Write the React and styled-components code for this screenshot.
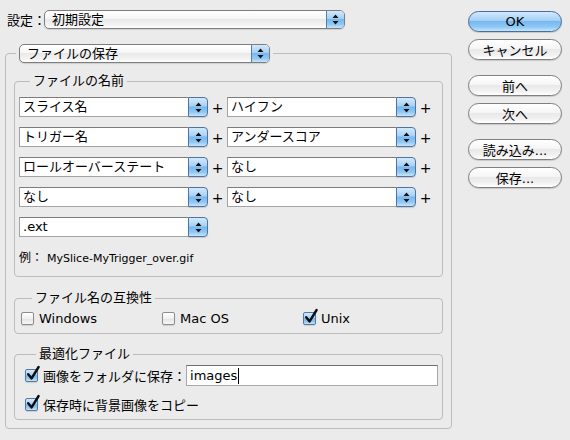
import React from 'react'
import styled, { createGlobalStyle, css } from 'styled-components'

const GlobalStyle = createGlobalStyle`
  html, body {
    margin: 0;
    padding: 0;
    background: #ebebeb;
  }
  body {
    font-family: "DejaVu Sans", "Noto Sans CJK JP", sans-serif;
    font-size: 13px;
    color: #000;
  }
  * { box-sizing: border-box; }
`

const aquaBlue = css`
  background: linear-gradient(to bottom, #d3e9fc 0%, #a6d1f6 44%, #78b8ef 50%, #8fc7f3 78%, #c6e6fd 100%);
`

const aquaWhite = css`
  background: linear-gradient(to bottom, #ffffff 0%, #f6f6f6 44%, #e9e9e9 50%, #f1f1f1 78%, #ffffff 100%);
`

function Arrows() {
  return (
    <svg width="7" height="11" viewBox="0 0 7 11">
      <path d="M3.5 0.5 L6.5 4 H0.5 Z M0.5 7 H6.5 L3.5 10.5 Z" fill="#111" />
    </svg>
  )
}

function Check() {
  return (
    <svg width="16" height="17" viewBox="0 0 16 17">
      <path d="M3.2 9.2 L6.6 13.4 L13.6 2" fill="none" stroke="#0d0d0d" strokeWidth="2.4" strokeLinecap="round" strokeLinejoin="round" />
    </svg>
  )
}

function PopUp({ width, children }) {
  return (
    <PopUpBox $w={width}>
      <PopUpText>{children}</PopUpText>
      <PopUpCap><Arrows /></PopUpCap>
    </PopUpBox>
  )
}

function Select({ children }) {
  return (
    <SelectBox>
      <SelectField>{children}</SelectField>
      <SelectCap><Arrows /></SelectCap>
    </SelectBox>
  )
}

function CheckItem({ on, children }) {
  return (
    <CheckLabel>
      <Box $on={on}>{on && <CheckMark><Check /></CheckMark>}</Box>
      <span>{children}</span>
    </CheckLabel>
  )
}

const nameRows = [
  ['スライス名', 'ハイフン'],
  ['トリガー名', 'アンダースコア'],
  ['ロールオーバーステート', 'なし'],
  ['なし', 'なし'],
]

export default function App() {
  return (
    <>
      <GlobalStyle />
      <Dialog>
        <LeftPane>
          <PresetRow>
            <PresetLabel>設定：</PresetLabel>
            <PopUp width={301}>初期設定</PopUp>
          </PresetRow>

          <Group $mt={15} $pad="10px 8px 8px 8px">
            <GroupTitle $ml={2}>
              <PopUp width={251}>ファイルの保存</PopUp>
            </GroupTitle>

            <Group $pad="8px 4px 10px 4px">
              <GroupTitle $ml={11}>ファイルの名前</GroupTitle>
              <NameGrid>
                {nameRows.map(([a, b], i) => (
                  <React.Fragment key={i}>
                    <Select>{a}</Select>
                    <Plus>+</Plus>
                    <Select>{b}</Select>
                    <Plus>+</Plus>
                  </React.Fragment>
                ))}
                <Select>.ext</Select>
              </NameGrid>
              <Example>
                <ExampleLabel>例：</ExampleLabel>MySlice-MyTrigger_over.gif
              </Example>
            </Group>

            <Group $mt={13} $pad="4px 6px 7px 6px">
              <GroupTitle $ml={11}>ファイル名の互換性</GroupTitle>
              <CompatGrid>
                <CheckItem>Windows</CheckItem>
                <CheckItem>Mac OS</CheckItem>
                <CheckItem on>Unix</CheckItem>
              </CompatGrid>
            </Group>

            <Group $mt={12} $pad="3px 7px 7px 10px">
              <GroupTitle $ml={11}>最適化ファイル</GroupTitle>
              <OptRow>
                <CheckItem on>画像をフォルダに保存：</CheckItem>
                <TextInput>images<Caret /></TextInput>
              </OptRow>
              <OptRow $mt={10} $h={16}>
                <CheckItem on>保存時に背景画像をコピー</CheckItem>
              </OptRow>
            </Group>
          </Group>
        </LeftPane>

        <RightPane>
          <PushButton $default>OK</PushButton>
          <PushButton $mt={7}>キャンセル</PushButton>
          <PushButton $mt={15}>前へ</PushButton>
          <PushButton $mt={7}>次へ</PushButton>
          <PushButton $mt={15}>読み込み...</PushButton>
          <PushButton $mt={7}>保存...</PushButton>
        </RightPane>
      </Dialog>
    </>
  )
}

const Dialog = styled.div`
  display: flex;
  width: 570px;
  height: 440px;
  background: #ebebeb;
  overflow: hidden;
`

const LeftPane = styled.div`
  width: 447px;
  margin-left: 5px;
  display: flex;
  flex-direction: column;
`

const RightPane = styled.div`
  width: 94px;
  margin-left: 16px;
  padding-top: 11px;
  display: flex;
  flex-direction: column;
`

const PresetRow = styled.div`
  display: flex;
  align-items: center;
  height: 19px;
  margin-top: 10px;
  padding-left: 2px;
`

const PresetLabel = styled.span`
  width: 37px;
  white-space: nowrap;
`

const PopUpBox = styled.div`
  display: flex;
  width: ${p => p.$w}px;
  height: 19px;
  border: 1px solid #7d7d7d;
  border-radius: 5px;
  overflow: hidden;
  ${aquaWhite};
  box-shadow: 0 1px 1px rgba(0, 0, 0, 0.12);
`

const PopUpText = styled.span`
  flex: 1;
  padding-left: 7px;
  line-height: 17px;
  white-space: nowrap;
  font-weight: normal;
`

const PopUpCap = styled.span`
  width: 18px;
  display: flex;
  align-items: center;
  justify-content: center;
  border-left: 1px solid #5a7eaa;
  ${aquaBlue};
`

const Group = styled.fieldset`
  margin: ${p => p.$mt || 0}px 0 0 0;
  padding: ${p => p.$pad};
  min-width: 0;
  border: 1px solid #bcbcbc;
  border-radius: 4px;
`

const GroupTitle = styled.legend`
  margin-left: ${p => p.$ml}px;
  padding: 0 3px;
  line-height: 16px;
  white-space: nowrap;
`

const NameGrid = styled.div`
  display: grid;
  grid-template-columns: 189px 19px 189px 19px;
  grid-auto-rows: 20px;
  row-gap: 10px;
  align-items: center;
`

const SelectBox = styled.div`
  display: flex;
  width: 189px;
  height: 20px;
`

const SelectField = styled.div`
  flex: 1;
  background: #fff;
  border: 1px solid #a3a3a3;
  border-top-color: #7c7c7c;
  border-right: none;
  padding-left: 3px;
  line-height: 18px;
  white-space: nowrap;
  overflow: hidden;
`

const SelectCap = styled.span`
  width: 20px;
  display: flex;
  align-items: center;
  justify-content: center;
  border: 1px solid #50739f;
  border-radius: 0 4px 4px 0;
  ${aquaBlue};
  box-shadow: 0 1px 1px rgba(0, 0, 0, 0.15);
`

const Plus = styled.span`
  height: 20px;
  text-align: center;
  font-size: 14px;
  line-height: 23px;
`

const Example = styled.div`
  margin-top: 14px;
  font-size: 11px;
  line-height: 14px;
  white-space: nowrap;
`

const ExampleLabel = styled.span`
  font-size: 12px;
  margin-right: 4px;
`

const CompatGrid = styled.div`
  display: grid;
  grid-template-columns: 141px 141px 141px;
  height: 16px;
  align-items: center;
`

const CheckLabel = styled.label`
  display: flex;
  align-items: center;
  gap: 5px;
  white-space: nowrap;
`

const Box = styled.span`
  position: relative;
  flex: none;
  width: 13px;
  height: 13px;
  border: 1px solid ${p => (p.$on ? '#56799f' : '#8c8c8c')};
  border-radius: 2px;
  ${p => (p.$on ? aquaBlue : css`background: linear-gradient(#ffffff, #f0f0f0 50%, #e3e3e3 51%, #f7f7f7);`)};
  box-shadow: 0 1px 1px rgba(0, 0, 0, 0.12);
`

const CheckMark = styled.span`
  position: absolute;
  left: -1px;
  top: -5px;
  display: flex;
`

const OptRow = styled.div`
  display: flex;
  align-items: center;
  height: ${p => p.$h || 21}px;
  margin-top: ${p => p.$mt || 0}px;

  & > label { flex: 1; }
`

const TextInput = styled.div`
  width: 252px;
  height: 21px;
  flex: none;
  background: #fff;
  border: 1px solid #a8a8a8;
  border-top-color: #6e6e6e;
  padding-left: 3px;
  line-height: 19px;
  display: flex;
  align-items: center;
`

const Caret = styled.span`
  display: inline-block;
  width: 1px;
  height: 16px;
  margin-left: 1px;
  background: #000;
`

const PushButton = styled.button`
  width: 94px;
  height: 21px;
  margin-top: ${p => p.$mt || 0}px;
  padding: 0;
  border-radius: 11px;
  font: inherit;
  color: #000;
  border: 1px solid ${p => (p.$default ? '#4a6d9c' : '#7f7f7f')};
  ${p => (p.$default ? aquaBlue : aquaWhite)};
  box-shadow: 0 1px 1px rgba(0, 0, 0, 0.15);
  white-space: nowrap;
`
